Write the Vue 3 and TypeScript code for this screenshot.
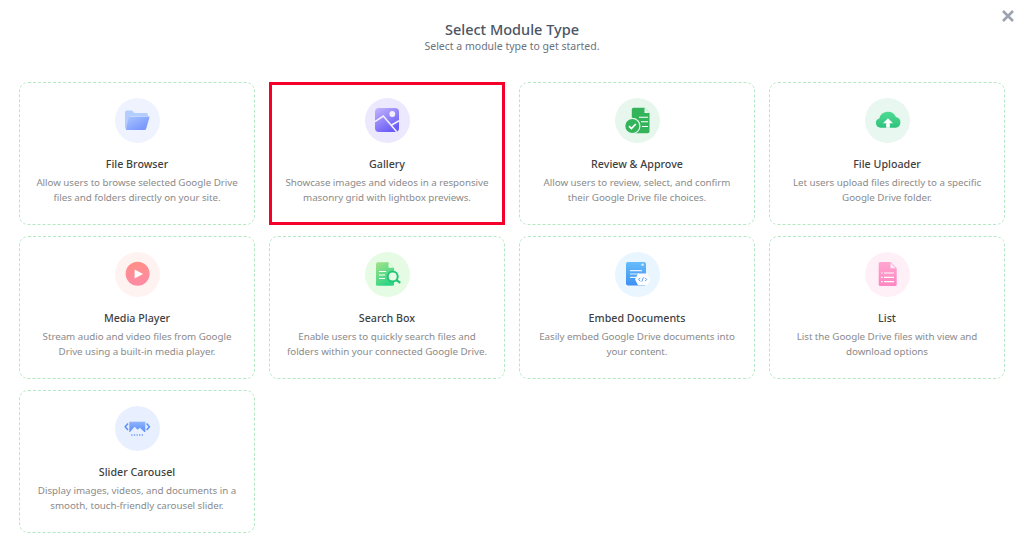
<script setup lang="ts">
interface ModuleType {
  key: string
  title: string
  desc: string
  bg: string
  selected?: boolean
}

const modules: ModuleType[] = [
  { key: 'browser', title: 'File Browser', desc: 'Allow users to browse selected Google Drive files and folders directly on your site.', bg: '#eef3ff' },
  { key: 'gallery', title: 'Gallery', desc: 'Showcase images and videos in a responsive masonry grid with lightbox previews.', bg: '#ece9ff', selected: true },
  { key: 'review', title: 'Review & Approve', desc: 'Allow users to review, select, and confirm their Google Drive file choices.', bg: '#e8f7ee' },
  { key: 'uploader', title: 'File Uploader', desc: 'Let users upload files directly to a specific Google Drive folder.', bg: '#e8f7ef' },
  { key: 'media', title: 'Media Player', desc: 'Stream audio and video files from Google Drive using a built-in media player.', bg: '#fff3f2' },
  { key: 'search', title: 'Search Box', desc: 'Enable users to quickly search files and folders within your connected Google Drive.', bg: '#e5fbe3' },
  { key: 'embed', title: 'Embed Documents', desc: 'Easily embed Google Drive documents into your content.', bg: '#e9f5ff' },
  { key: 'list', title: 'List', desc: 'List the Google Drive files with view and download options', bg: '#ffeff7' },
  { key: 'slider', title: 'Slider Carousel', desc: 'Display images, videos, and documents in a smooth, touch-friendly carousel slider.', bg: '#e8f0ff' },
]
</script>

<template>
  <div class="page">
    <button class="close" aria-label="Close">
      <svg width="12" height="12" viewBox="0 0 12 12" fill="none" stroke="#9ca3af" stroke-width="2.6">
        <path d="M1 1l10 10M11 1L1 11" />
      </svg>
    </button>

    <header class="head">
      <h2>Select Module Type</h2>
      <p>Select a module type to get started.</p>
    </header>

    <div class="grid">
      <div v-for="m in modules" :key="m.key" class="card" :class="{ selected: m.selected }">
        <div class="icon" :style="{ background: m.bg }">
          <svg width="45" height="45" viewBox="0 0 45 45">
            <defs>
              <linearGradient id="g-folder" x1="0" y1="0" x2="1" y2="1">
                <stop offset="0" stop-color="#a9c6ff" />
                <stop offset="1" stop-color="#6f8cfb" />
              </linearGradient>
              <linearGradient id="g-gallery" x1="0" y1="0" x2="0.6" y2="1">
                <stop offset="0" stop-color="#c4b5fd" />
                <stop offset="1" stop-color="#6a5cf6" />
              </linearGradient>
              <linearGradient id="g-cloud" x1="0" y1="0" x2="0" y2="1">
                <stop offset="0" stop-color="#4fdc94" />
                <stop offset="1" stop-color="#2fc27d" />
              </linearGradient>
              <linearGradient id="g-media" x1="0" y1="0" x2="0" y2="1">
                <stop offset="0" stop-color="#ff8f86" />
                <stop offset="1" stop-color="#ff8aa6" />
              </linearGradient>
              <linearGradient id="g-search" x1="0" y1="0" x2="0.5" y2="1">
                <stop offset="0" stop-color="#a6e28a" />
                <stop offset="1" stop-color="#2fd584" />
              </linearGradient>
              <linearGradient id="g-embed" x1="0" y1="0" x2="0" y2="1">
                <stop offset="0" stop-color="#66bcfb" />
                <stop offset="1" stop-color="#3f90f2" />
              </linearGradient>
              <linearGradient id="g-list" x1="0" y1="0" x2="0" y2="1">
                <stop offset="0" stop-color="#ffa6d0" />
                <stop offset="1" stop-color="#ff86c2" />
              </linearGradient>
              <linearGradient id="g-slider" x1="0" y1="0" x2="0" y2="1">
                <stop offset="0" stop-color="#8fb4fd" />
                <stop offset="1" stop-color="#5b8ffa" />
              </linearGradient>
            </defs>

            <template v-if="m.key === 'browser'">
              <path d="M10 14.5a2 2 0 0 1 2-2h5l2.5 2.5H31a2 2 0 0 1 2 2V18H15l-4 13-1-1z" fill="#b4cdff" />
              <path d="M15 18.5h18.4a1 1 0 0 1 1 1.3L31 31a1.6 1.6 0 0 1-1.5 1H12a1 1 0 0 1-1-1.3l2.6-11a1.6 1.6 0 0 1 1.4-1.2z" fill="url(#g-folder)" />
            </template>

            <template v-else-if="m.key === 'gallery'">
              <rect x="10" y="10" width="24" height="24" rx="4" fill="url(#g-gallery)" />
              <circle cx="27.3" cy="16" r="2.9" fill="#f3efff" />
              <path d="M10 23.7l8.3-5.7 13.4 15.7M26.7 27l7.3-4.3" fill="none" stroke="#f3efff" stroke-width="1.6" />
            </template>

            <template v-else-if="m.key === 'review'">
              <path d="M18.5 9.7h11l5 5.3v18.6a1.7 1.7 0 0 1-1.7 1.7H18.5a1.7 1.7 0 0 1-1.7-1.7V11.4a1.7 1.7 0 0 1 1.7-1.7z" fill="#34b45a" />
              <path d="M29.5 9.7v5.3h5z" fill="#e8f7ee" />
              <path d="M24 19.3h9M26 23.8h7M27 28.5h6" stroke="#fff" stroke-width="1.1" fill="none" />
              <circle cx="17.3" cy="28" r="8.2" fill="#e8f7ee" />
              <circle cx="17.3" cy="28" r="7" fill="#34b45a" />
              <path d="M14 28.2l2.4 2.4 4.4-4.6" fill="none" stroke="#fff" stroke-width="1.7" />
            </template>

            <template v-else-if="m.key === 'uploader'">
              <path d="M15.5 29.7a4.7 4.7 0 0 1-1.2-9.2 8.8 8.8 0 0 1 16.6-1.6 5.5 5.5 0 0 1 .1 10.8z" fill="url(#g-cloud)" />
              <path d="M23 20.3l-5 5h3.2v4.4h3.6v-4.4H28z" fill="#fff" />
            </template>

            <template v-else-if="m.key === 'media'">
              <circle cx="22.6" cy="21.8" r="12" fill="url(#g-media)" />
              <path d="M19.6 17.5l8.5 4.5-8.5 4.5z" fill="#fff" />
            </template>

            <template v-else-if="m.key === 'search'">
              <path d="M12.5 10.3h11l5.5 5.5v16.5a1.5 1.5 0 0 1-1.5 1.5h-15a1.5 1.5 0 0 1-1.5-1.5V11.8a1.5 1.5 0 0 1 1.5-1.5z" fill="url(#g-search)" />
              <path d="M23.5 10.3v5.5H29z" fill="#e5fbe3" />
              <path d="M14 19.5h7M14 23h6M14 26.5h6" stroke="#fff" stroke-width="1.2" fill="none" />
              <circle cx="27.7" cy="24.4" r="5" fill="#e5fbe3" stroke="#22c679" stroke-width="2" />
              <path d="M31.3 28l4 2.8" stroke="#22c679" stroke-width="2.2" fill="none" />
            </template>

            <template v-else-if="m.key === 'embed'">
              <rect x="11" y="10" width="20" height="23.4" rx="2" fill="url(#g-embed)" />
              <circle cx="27.5" cy="12.8" r="1.3" fill="#cfe8ff" />
              <path d="M15 18.6h12M15 22h9M15 25.4h6" stroke="#e4f2ff" stroke-width="1.1" fill="none" />
              <path d="M23 21.5h9.4l3 5.9-3 5.9H23l-3-5.9z" fill="#fff" />
              <path d="M25.3 25.8l-1.7 1.7 1.7 1.7M30 25.8l1.7 1.7-1.7 1.7M28.4 25.4l-1.5 4.2" fill="none" stroke="#3f90f2" stroke-width="0.9" />
            </template>

            <template v-else-if="m.key === 'list'">
              <path d="M15.2 10h10.3l6.2 6.2v16.3a1.5 1.5 0 0 1-1.5 1.5h-15a1.5 1.5 0 0 1-1.5-1.5v-21a1.5 1.5 0 0 1 1.5-1.5z" fill="url(#g-list)" />
              <path d="M25.5 11v5.2h5.2z" fill="#ffeff7" />
              <path d="M16 21h1.6M19 21h10M16 25.3h1.6M19 25.3h10M16 29.6h1.6M19 29.6h10" stroke="#fff" stroke-width="1.2" fill="none" />
            </template>

            <template v-else>
              <rect x="14.3" y="15.7" width="16" height="10.3" fill="url(#g-slider)" />
              <path d="M15 26l4.6-5.2 3 3 2.2-2 4.6 4.2z" fill="#e8f0ff" />
              <path d="M13 17.5l-2.8 3.2 2.8 3.2M31.6 17.5l2.8 3.2-2.8 3.2" fill="none" stroke="#5b8ffa" stroke-width="1.5" />
              <path d="M16.3 29h1.3M18.9 29h1.3M21.5 29h1.3M24.1 29h1.3M26.7 29h1.3" stroke="#6f9cfb" stroke-width="1.3" fill="none" />
            </template>
          </svg>
        </div>
        <h3>{{ m.title }}</h3>
        <p>{{ m.desc }}</p>
      </div>
    </div>
  </div>
</template>

<style>
body {
  background: #fff;
}
</style>

<style scoped>
.page {
  position: relative;
  width: 1024px;
  height: 553px;
  overflow: hidden;
  box-sizing: border-box;
  padding: 0 19px;
  font-family: "Noto Sans", "Open Sans", sans-serif;
  background: #fff;
}

.close {
  position: absolute;
  top: 10px;
  right: 10px;
  padding: 0;
  border: none;
  background: transparent;
  line-height: 0;
  cursor: pointer;
}

.head {
  height: 82px;
  padding-top: 20px;
  box-sizing: border-box;
  text-align: center;
}

.head h2 {
  margin: 0;
  font-size: 14.5px;
  line-height: 18px;
  font-weight: 500;
  color: #4b5563;
}

.head p {
  margin: 0;
  font-size: 10.5px;
  line-height: 16px;
  color: #6b7280;
}

.grid {
  display: grid;
  grid-template-columns: repeat(4, 236px);
  grid-auto-rows: 143px;
  column-gap: 14px;
  row-gap: 11px;
}

.card {
  box-sizing: border-box;
  padding: 15px 13px 0;
  border: 1px dashed #b4e8c2;
  border-radius: 9px;
  text-align: center;
}

.card.selected {
  border-color: transparent;
  border-radius: 0;
  outline: 3px solid #f5002a;
  outline-offset: -3px;
}

.icon {
  width: 45px;
  height: 45px;
  margin: 0 auto 13px;
  border-radius: 50%;
}

.icon svg {
  display: block;
}

.card h3 {
  margin: 0 0 3px;
  font-size: 10.7px;
  line-height: 16px;
  font-weight: 500;
  color: #3f3f3f;
}

.card p {
  margin: 0;
  font-size: 9.8px;
  letter-spacing: -0.05px;
  line-height: 15px;
  color: #8b8b8b;
}
</style>
